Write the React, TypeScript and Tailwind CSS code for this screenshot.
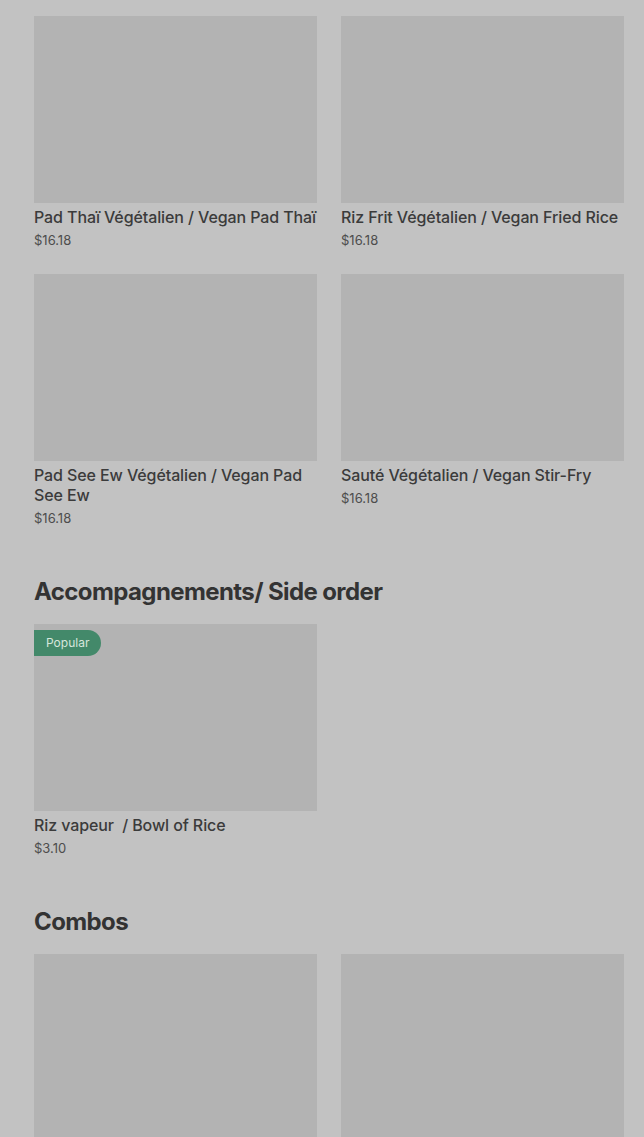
import React from 'react';

type Item = { name: string; price: string; popular?: boolean };

const sections: { title: string; items: Item[] }[] = [
  {
    title: 'Plats Végétaliens/ Vegan Dishes',
    items: [
      { name: 'Pad Thaï Végétalien / Vegan Pad Thaï', price: '$16.18' },
      { name: 'Riz Frit Végétalien / Vegan Fried Rice', price: '$16.18' },
      { name: 'Pad See Ew Végétalien / Vegan Pad See Ew', price: '$16.18' },
      { name: 'Sauté Végétalien / Vegan Stir-Fry', price: '$16.18' },
    ],
  },
  {
    title: 'Accompagnements/ Side order',
    items: [{ name: 'Riz vapeur\u00a0 / Bowl of Rice', price: '$3.10', popular: true }],
  },
  {
    title: 'Combos',
    items: [
      { name: 'Combo 1', price: '$20.00' },
      { name: 'Combo 2', price: '$20.00' },
    ],
  },
];

function Card({ item }: { item: Item }): JSX.Element {
  return (
    <div className="flex flex-col">
      <div className="relative h-[187px] bg-[#b3b3b3]">
        {item.popular && (
          <span className="absolute left-0 top-[6px] h-[26px] pl-3 pr-3 rounded-r-full bg-[#43896a] text-[12px] leading-[26px] text-[#d6e6dc]">
            Popular
          </span>
        )}
      </div>
      <div className="mt-1 text-[16px] leading-5 font-medium tracking-[-0.1px] text-[#3b3b3b]">
        {item.name}
      </div>
      <div className="mt-[3px] text-[13px] leading-5 text-[#4d4d4d]">{item.price}</div>
    </div>
  );
}

function App(): JSX.Element {
  return (
    <div
      className="h-[1137px] overflow-hidden bg-[#c2c2c2] px-[34px] pr-5"
      style={{ fontFamily: 'Inter, "Noto Sans", sans-serif' }}
    >
      <div className="-mt-8 flex flex-col gap-12">
        {sections.map((s) => (
          <section key={s.title}>
            <h2 className="text-[24px] leading-8 font-bold tracking-[-0.6px] text-[#333333] mb-4">
              {s.title}
            </h2>
            <div className="grid grid-cols-2 gap-x-6 gap-y-6">
              {s.items.map((it) => (
                <Card key={it.name} item={it} />
              ))}
            </div>
          </section>
        ))}
      </div>
    </div>
  );
}

export default App;
